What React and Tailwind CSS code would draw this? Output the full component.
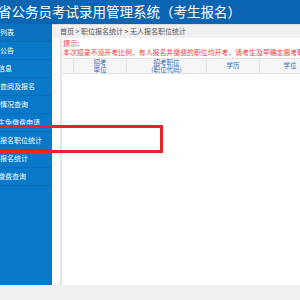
import React from "react";

const menu = [
  { label: "公告", cut: false },
  { label: "信息", cut: true },
  { label: "查阅及报名", cut: false },
  { label: "情况查询", cut: false },
  { label: "生免缴费申请", cut: true },
  { label: "报名职位统计", cut: false },
  { label: "报名统计", cut: false },
  { label: "缴费查询", cut: true },
];

const App = () => {
  return (
    <div
      className="relative w-[300px] h-[300px] overflow-hidden bg-[#f0f0f0]"
      style={{ fontFamily: '"Noto Sans CJK SC", "Noto Sans", sans-serif' }}
    >
      {/* HEADER */}
      <div className="h-[24px] bg-[#0c65b3] flex items-center overflow-hidden">
        <span className="ml-[-2px] text-[13.5px] leading-none text-white whitespace-nowrap">
          省公务员考试录用管理系统（考生报名）
        </span>
      </div>

      <div className="flex h-[261px]">
        {/* SIDEBAR */}
        <div className="w-[52px] shrink-0 bg-[#0879c9] overflow-hidden">
          <div className="h-[18px] flex items-center border-b border-[#0a6db6] bg-[#0a72c0]">
            <span className="text-[7px] text-white whitespace-nowrap">列表</span>
          </div>
          {menu.map((item) => (
            <div
              key={item.label}
              className="h-[18px] flex items-center border-b border-[#0a6db6]"
            >
              <span
                className={
                  item.cut
                    ? "ml-[-2px] text-[7px] text-white whitespace-nowrap"
                    : "text-[7px] text-white whitespace-nowrap"
                }
              >
                {item.label}
              </span>
            </div>
          ))}
        </div>

        {/* MAIN */}
        <div className="flex-1 flex flex-col bg-white min-w-0">
          <div className="h-[14px] bg-[#f0f0f0] border-t border-[#dcdcdc] flex items-center pl-[8px]">
            <span className="text-[7px] text-[#555] whitespace-nowrap">
              首页 &gt; 职位报名统计 &gt; 无人报名职位统计
            </span>
          </div>
          <div className="flex-1 flex bg-[#fafafa] pl-[8px]">
            <div className="flex-1 min-w-0 bg-white border-l-2 border-[#e6e6e6] overflow-hidden">
              <div className="pt-[1px] pl-[1px] text-[6.9px] leading-[9px] text-[#f23a3a] whitespace-nowrap">
                <div className="text-[7.3px]">提示:</div>
                <div>
                  本次招录不设开考比例，有人报名并缴费的职位均开考，请考生及早确定报考职位
                </div>
              </div>
              <div className="mt-[1px] flex h-[16px] w-[260px] bg-[#f5f5f5] border-y border-[#e0e0e0] text-[6.5px] leading-[7.5px] text-[#2f6fc0]">
                <div className="w-[12px] border-r border-[#e0e0e0]"></div>
                <div className="w-[53px] border-r border-[#e0e0e0] flex flex-col items-center justify-center">
                  <span>招考</span>
                  <span>单位</span>
                </div>
                <div className="w-[80px] border-r border-[#e0e0e0] flex flex-col items-center justify-center">
                  <span>招考职位</span>
                  <span>(职位代码)</span>
                </div>
                <div className="w-[53px] border-r border-[#e0e0e0] flex items-center justify-center">
                  学历
                </div>
                <div className="w-[60px] flex items-center justify-center">学位</div>
              </div>
            </div>
          </div>
        </div>
      </div>

      {/* annotation box */}
      <div className="absolute left-[-6px] top-[125px] w-[169px] h-[28px] border-[3px] border-[#e8232b]"></div>
    </div>
  );
};

export default App;
